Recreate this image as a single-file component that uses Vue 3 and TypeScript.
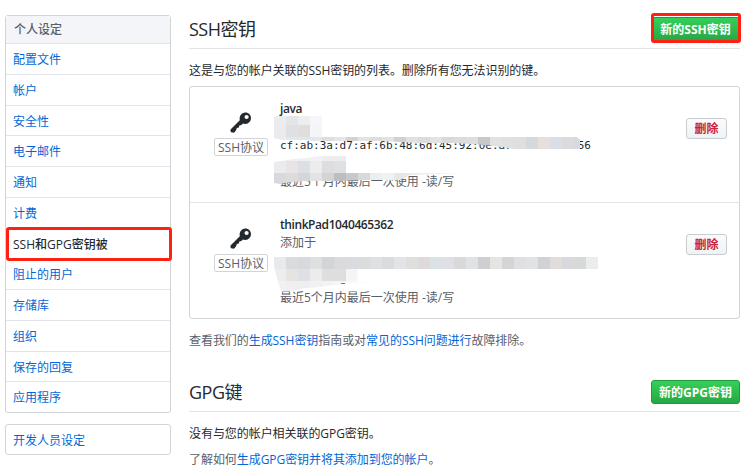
<script setup lang="ts">
type Block = [x: number, y: number, w: number, h: number, color: string]

interface SshKey {
  id: number
  title: string
  added: string
  print: string
  tail: string
  used: string
}

const menu: string[] = [
  '配置文件', '帐户', '安全性', '电子邮件', '通知', '计费', 'SSH和GPG密钥被',
  '阻止的用户', '存储库', '组织', '保存的回复', '应用程序',
]
const current = 6

const keys: SshKey[] = [
  { id: 1, title: 'java', added: '', print: 'cf:ab:3a:d7:af:6b:48:6d:45:92:0e:a7:', tail: '56', used: '最近5个月内最后一次使用 -读/写' },
  { id: 2, title: 'thinkPad1040465362', added: '添加于', print: '', tail: '', used: '最近5个月内最后一次使用 -读/写' },
]

function strip(x: number, y: number, h: number, colors: string[]): Block[] {
  return colors.map((c, i): Block => [x + i * 12, y, 12, h, c])
}

const mosaics: Block[][] = [
  [
    ...strip(274, 116, 9, ['#ececee', '#e4e5e8', '#eeeeef', '#f5f6fa']),
    ...strip(274, 125, 12, ['#ebebed', '#dfe0e4', '#dfdedd', '#f4f5f9']),
    ...strip(274, 137, 13, [
      '#ececee', '#e6e7e9', '#e5e5e6', '#e4e6e7', '#dddedf', '#e4e5e4', '#d2d3d7', '#e2e3e4',
      '#dcdedf', '#e2e3e3', '#d5d0ce', '#dce2e6', '#dcdcdf', '#e2e3e3', '#d9d9db', '#dbdcdc',
      '#dcdddf', '#c7c8ca', '#e0e2e3', '#dfe0e1', '#dfdfdd', '#d7d8dc', '#e5dfde', '#d9dfe4',
      '#dadbdc', '#d8d9da',
    ]),
    ...strip(274, 156, 5, ['#f3f3f4', '#eeeeef', '#eff0f1', '#f2f2f4', '#eeeeef', '#ebecee']),
    ...strip(274, 161, 12, ['#ebebed', '#e9e3e3', '#dce0e4', '#ececee', '#dddde0', '#dfe0e2']),
    ...strip(274, 173, 12, [
      '#d9d9dc', '#dcdcdf', '#d5d6da', '#e2e4e4', '#d4d3d5', '#bdbec2', '#c8c9cc', '#d8d9dd',
      '#eceeee', '#f0f1f1', '#e6e7e7', '#e9eaea', '#eeeff0', '#f0f0f1', '#f4f4f4', '#fafafa',
    ]),
  ],
  [
    ...strip(274, 257, 12, [
      '#e9eaed', '#dadbde', '#d8d9dc', '#dedfdf', '#d3d4d7', '#dad9db', '#dadbde', '#dbdddc',
      '#dfe0e1', '#dadbde', '#e3e4e6', '#dfdfdd', '#dfdad9', '#dce1e6', '#dfe0e3', '#d9d9da',
      '#e1e2e5', '#cfcfd2', '#e5e5e3', '#d5d5d6', '#e0e0e3', '#e1e2e4', '#d0d2d3', '#e1dddc',
      '#d8d9df', '#d7d9d8', '#ebedec',
    ]),
    ...strip(274, 269, 12, ['#ededf0', '#e6e3e3', '#dde0e5', '#ececed', '#dddedf', '#dededf', '#f5f5f6']),
    ...strip(274, 281, 11, ['#f1f1f2', '#efeff0', '#efeff0', '#f1f1f2', '#f3f3f4', '#f5f5f6', '#fafafa', '#fcfcfc']),
  ],
]

const outlines: string[] = [
  'M274 117L277 116H322V137H577L580 140V149H514L502 147L484 145L456 143H420L380 141H312L306 140H282L274 138Z'
    + 'M274 162Q290 159 306 158L320 156H346V173H465L440 174L410 175L400 180H360L340 181H306Q290 182 280 184L274 183Z',
  'M274 257H598V269H358L357 281L370 282L364 283H350L335 285Q315 288 305 288Q292 292 281 291Q277 280 274 266Z',
]
</script>

<template>
  <div class="page">
    <aside class="side">
      <nav class="menu">
        <div class="menu-head">个人设定</div>
        <a v-for="(m, i) in menu" :key="m" class="menu-item" :class="{ current: i === current }">{{ m }}</a>
      </nav>
      <nav class="menu dev"><a class="menu-item">开发人员设定</a></nav>
    </aside>

    <main class="main">
      <header class="head">
        <h2>SSH密钥</h2>
        <button class="btn primary marked">新的SSH密钥</button>
      </header>
      <p class="intro">这是与您的帐户关联的SSH密钥的列表。删除所有您无法识别的键。</p>

      <ul class="keys">
        <li v-for="(k, i) in keys" :key="k.id" class="key">
          <div class="kind">
            <svg class="icon" viewBox="0 0 22 21" width="22" height="21">
              <path fill="#24292e" fill-rule="evenodd" d="M15.3.5C18.8.5 21 3 21 6s-2.300 5.900-5.800 5.900c-.9 0-1.700-.1-2.300-.4l-1.500 1.500-2.100.4-.4 2-2.100.5-.5 1.900-1.500 2.100c-.6.7-1.500.9-2.700.6C.8 20.300.3 19.300.5 18c0-.5.2-.8.5-1.100L9.800 8.200C9 4.300 11.300.5 15.300.5zM16.600 2.900a2.100 2.100 0 1 0 0 4.200 2.100 2.100 0 0 0 0-4.200z" />
            </svg>
            <span class="tag">SSH协议</span>
          </div>
          <div class="info">
            <strong>{{ k.title }}</strong>
            <span class="line">{{ k.added }}</span>
            <code class="line print"><span>{{ k.print }}</span><span>{{ k.tail }}</span></code>
            <span class="line used">{{ k.used }}</span>
          </div>
          <button class="btn danger">删除</button>
          <svg class="mosaic" :viewBox="`190 ${i === 0 ? 87 : 203} 549 115`" width="549" height="115" shape-rendering="crispEdges">
            <clipPath :id="`blur-${k.id}`"><path :d="outlines[i]" /></clipPath>
            <g :clip-path="`url(#blur-${k.id})`">
              <rect v-for="(b, n) in mosaics[i]" :key="n" :x="b[0]" :y="b[1]" :width="b[2]" :height="b[3]" :fill="b[4]" />
            </g>
            <path v-if="i === 1" d="M341 283h4" stroke="#777b80" stroke-width="1" />
          </svg>
        </li>
      </ul>

      <p class="help">查看我们的<a>生成SSH密钥</a>指南或对<a>常见的SSH问题进行</a>故障排除。</p>

      <header class="head gpg">
        <h2>GPG键</h2>
        <button class="btn primary">新的GPG密钥</button>
      </header>
      <p class="none">没有与您的帐户相关联的GPG密钥。</p>
      <p class="learn">了解如何<a>生成GPG密钥并将其添加到您的帐户</a>。</p>
    </main>
  </div>
</template>

<style>
body {
  margin: 0;
  background: #fff;
  overflow: hidden;
}
</style>

<style scoped>
.page {
  box-sizing: border-box;
  width: 747px;
  height: 474px;
  padding: 15px 7px 0 5px;
  display: flex;
  gap: 18px;
  overflow: hidden;
  font: 12px/18px "Open Sans", "Noto Sans CJK SC", sans-serif;
  color: #24292e;
}
a { color: #0366d6; }
p, h2, ul { margin: 0; padding: 0; }
p { letter-spacing: -0.06px; }
.side { width: 166px; flex: none; }
.menu {
  border: 1px solid #d1d5da;
  border-radius: 3px;
  margin-bottom: 11px;
}
.menu-head {
  box-sizing: border-box;
  height: 27px;
  padding: 0 8px;
  line-height: 28px;
  font-weight: 500;
  color: #586069;
  background: #f3f5f8;
}
.menu-item {
  box-sizing: border-box;
  display: block;
  height: 30.75px;
  padding: 0 7px;
  line-height: 31px;
  border-top: 1px solid #e1e4e8;
}
.current {
  position: relative;
  color: #24292e;
  font-weight: 500;
}
.current::after {
  content: "";
  position: absolute;
  inset: -2px -2px -3px 0;
  border: 3px solid #fe2013;
  border-radius: 3px;
}
.dev .menu-item { height: 29px; border-top: 0; line-height: 31px; }

.main { flex: 1; min-width: 0; }
.head {
  box-sizing: border-box;
  height: 34px;
  display: flex;
  justify-content: space-between;
  border-bottom: 1px solid #e1e4e8;
}
h2 { font-size: 18px; font-weight: 400; line-height: 28px; letter-spacing: -0.5px; }
.btn {
  box-sizing: border-box;
  font: bold 12px/20px "Open Sans", "Noto Sans CJK SC", sans-serif;
  border-radius: 3px;
  padding: 0;
  text-align: center;
  white-space: nowrap;
}
.primary {
  position: relative;
  width: 89px;
  height: 24px;
  margin-top: 2px;
  padding-top: 2px;
  color: #fff;
  border: 1px solid #269841;
  background: linear-gradient(#34d058, #28a745);
}
.marked::after {
  content: "";
  position: absolute;
  inset: -5px -2px -3px -1px;
  border: 3px solid #fe2013;
  border-radius: 3px;
}
.intro { margin-top: 13px; }
.keys {
  list-style: none;
  margin-top: 6px;
  border: 1px solid #d1d5da;
  border-radius: 3px;
}
.key {
  box-sizing: border-box;
  position: relative;
  height: 115px;
  display: flex;
  align-items: flex-start;
  padding: 13px 12px 0 24px;
}
.key + .key { height: 116px; border-top: 1px solid #e1e4e8; padding-top: 13px; }
.kind {
  width: 54px;
  display: flex;
  flex-direction: column;
  align-items: center;
  padding-top: 12px;
}
.icon { display: block; }
.tag {
  box-sizing: border-box;
  width: 54px;
  height: 18px;
  margin-top: 5px;
  border: 1px solid #d1d5da;
  border-radius: 2px;
  line-height: 17px;
  text-align: center;
  color: #586069;
}
.info { flex: 1; padding-left: 12px; display: flex; flex-direction: column; }
.info strong { font-weight: 600; line-height: 18px; letter-spacing: -0.42px; }
.line { display: block; height: 18px; color: #586069; white-space: nowrap; }
.print {
  display: flex;
  justify-content: space-between;
  width: 311px;
  font: 11px/20px "DejaVu Sans Mono", monospace;
  color: #24292e;
}
.used { margin-top: 19px; }
.danger {
  width: 41px;
  height: 21px;
  margin-top: 18px;
  line-height: 19px;
  color: #cb2431;
  border: 1px solid #c9ccd0;
  background: linear-gradient(#fafbfc, #eff3f6);
}
.mosaic { position: absolute; left: 0; top: 0; }
.help { margin-top: 13px; color: #586069; }
.gpg { margin-top: 28px; }
.none { margin-top: 13px; }
.learn { margin-top: 8px; color: #586069; }
</style>
